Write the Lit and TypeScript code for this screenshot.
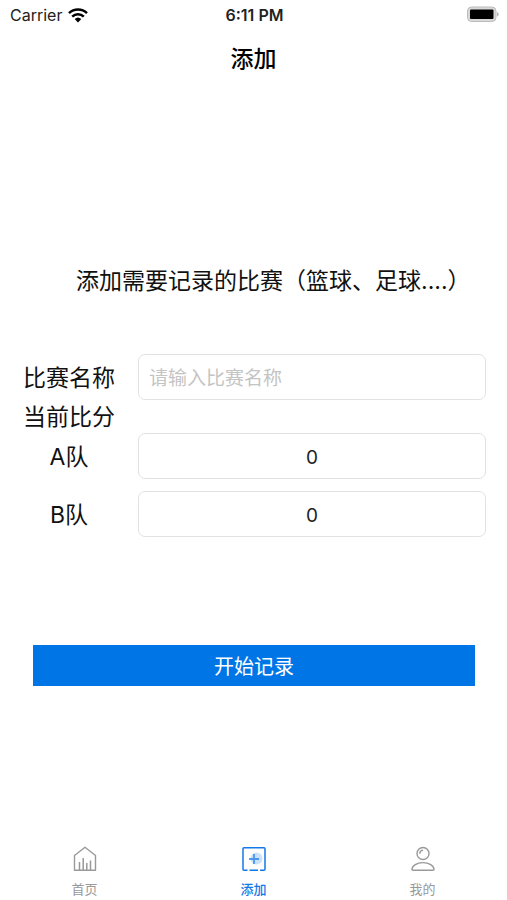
import { LitElement, html, css, svg } from "lit";
import { customElement, property, state } from "lit/decorators.js";
import { classMap } from "lit/directives/class-map.js";

type TabId = "home" | "add" | "me";

const icons = {
  home: svg`
    <g fill="none" stroke="currentColor">
      <path d="M3.500 10.500 14 2.200 24.500 10.500V25.200H3.500Z" stroke-width="1.400" stroke-linejoin="round" />
      <path d="M8.500 25V17M12.200 25V13M15.800 25V18M19.500 25V15.500" stroke-width="1.500" />
    </g>`,
  add: svg`
    <rect x="3" y="2.700" width="22" height="22.500" rx="1" fill="none" stroke="currentColor" stroke-width="1.500" />
    <circle cx="16.500" cy="13.500" r="6" fill="currentColor" opacity="0.22" />
    <path d="M9 14H19M14 9V19" stroke="currentColor" stroke-width="1.800" opacity="0.7" />
    <path d="M7.500 24.800H9.500M18 24.800H20" stroke="#fff" stroke-width="2.500" />`,
  me: svg`
    <g fill="none" stroke="currentColor" stroke-width="1.400" stroke-linecap="round" stroke-linejoin="round">
      <circle cx="14" cy="8.500" r="6" />
      <path d="M10.800 8.200A3.300 3.300 0 0 1 13.500 5.300" />
      <path d="M3 24.500C3 20.500 8 17.600 14 17.600S25 20.500 25 24.500Q25 25.200 24 25.200H4Q3 25.200 3 24.500Z" />
    </g>`,
};

@customElement("status-bar")
export class StatusBar extends LitElement {
  static styles = css`
    :host {
      display: grid;
      grid-template-columns: 1fr auto 1fr;
      align-items: center;
      height: 30px;
      padding: 0 8px 0 10px;
      font-size: 16px;
      line-height: 20px;
      color: #222;
    }
    .network {
      display: flex;
      align-items: center;
      gap: 6px;
    }
    .time {
      font-weight: 600;
    }
    .battery {
      justify-self: end;
    }
    svg {
      display: block;
    }
  `;

  render() {
    return html`
      <div class="network">
        <span>Carrier</span>
        <svg width="20" height="15" viewBox="0 0 20 15" role="img" aria-label="Wi-Fi">
          <g fill="none" stroke="#000" stroke-width="2.500">
            <path d="M1 5.200A13 13 0 0 1 19 5.200" />
            <path d="M4.200 8.600A8.300 8.300 0 0 1 15.800 8.600" />
          </g>
          <path d="M6.700 11.100A4.800 4.800 0 0 1 13.300 11.100L10 14.500Z" fill="#000" />
        </svg>
      </div>
      <span class="time">6:11 PM</span>
      <svg class="battery" width="33" height="18" viewBox="0 0 33 18" role="img" aria-label="Battery">
        <rect x="1.500" y="1" width="28.500" height="14.500" rx="4" fill="#d8d8d8" stroke="#bcbcbc" stroke-width="1" />
        <rect x="4" y="3.500" width="23.500" height="9.500" rx="1" fill="#000" />
        <path d="M31 6Q32.700 7 32.700 8.300T31 10.600Z" fill="#b4b4b4" />
      </svg>
    `;
  }
}

@customElement("tab-bar")
export class TabBar extends LitElement {
  @property() active: TabId = "add";

  static styles = css`
    :host {
      display: block;
    }
    nav {
      display: grid;
      grid-template-columns: repeat(3, 1fr);
    }
    .tab {
      display: flex;
      flex-direction: column;
      align-items: center;
      gap: 7px;
      height: 55px;
      font-size: 13px;
      line-height: 18px;
      color: #999;
      text-decoration: none;
    }
    .active {
      color: #1478e8;
      font-weight: 500;
    }
  `;

  render() {
    const tabs: { id: TabId; label: string }[] = [
      { id: "home", label: "首页" },
      { id: "add", label: "添加" },
      { id: "me", label: "我的" },
    ];
    return html`<nav>
      ${tabs.map(
        (tab) => html`<a
          class=${classMap({ tab: true, active: tab.id === this.active })}
          href="#${tab.id}"
        >
          <svg width="28" height="28" viewBox="0 0 28 28" aria-hidden="true">${icons[tab.id]}</svg>
          <span>${tab.label}</span>
        </a>`
      )}
    </nav>`;
  }
}

@customElement("app-root")
export class AppRoot extends LitElement {
  @state() private scores = { a: "0", b: "0" };

  static styles = css`
    :host {
      display: flex;
      flex-direction: column;
      min-height: 100vh;
      background: #fff;
      color: #111;
      font-family: Inter, "Noto Sans CJK SC", sans-serif;
    }
    .title {
      margin: 0;
      font-size: 23px;
      line-height: 58px;
      font-weight: 500;
      text-align: center;
      color: #000;
    }
    main {
      flex: 1;
      display: flex;
      flex-direction: column;
      padding-top: 177px;
    }
    .prompt {
      margin: 0 0 57px;
      padding-left: 15%;
      font-size: 23px;
      line-height: 32px;
      font-weight: 400;
      white-space: nowrap;
    }
    form {
      display: flex;
      flex-direction: column;
    }
    .row {
      display: grid;
      grid-template-columns: 138px 1fr;
      align-items: center;
      padding-right: 21px;
    }
    .row + .row {
      margin-top: 12px;
    }
    .label {
      box-sizing: border-box;
      width: 138px;
      padding-top: 2px;
      font-size: 23px;
      line-height: 31px;
      text-align: center;
    }
    .field {
      box-sizing: border-box;
      width: 100%;
      height: 46px;
      padding: 2px 10px 0;
      border: 1px solid #e2e2e2;
      border-radius: 7px;
      background: #fff;
      color: #222;
      font: inherit;
      font-size: 19px;
      outline: none;
    }
    .field::placeholder {
      color: #c4c4c4;
      opacity: 1;
    }
    .score {
      text-align: center;
    }
    .submit {
      height: 41px;
      margin: 108px 32px 0 33px;
      padding: 0;
      border: 0;
      background: #0076e6;
      color: #fff;
      font: inherit;
      font-size: 20px;
    }
  `;

  render() {
    return html`
      <status-bar></status-bar>
      <h1 class="title">添加</h1>
      <main>
        <h2 class="prompt">添加需要记录的比赛（篮球、足球....）</h2>
        <form @submit=${(e: Event) => e.preventDefault()}>
          <div class="row">
            <label class="label" for="name">比赛名称</label>
            <input class="field" id="name" type="text" placeholder="请输入比赛名称" />
          </div>
          <div role="group" aria-labelledby="score-heading">
            <div class="label" id="score-heading">当前比分</div>
            ${this.renderScore("a", "A队")} ${this.renderScore("b", "B队")}
          </div>
          <button class="submit" type="submit">开始记录</button>
        </form>
      </main>
      <tab-bar active="add"></tab-bar>
    `;
  }

  private renderScore(team: "a" | "b", label: string) {
    return html`<div class="row">
      <label class="label" for=${team}>${label}</label>
      <input
        class="field score"
        id=${team}
        type="text"
        inputmode="numeric"
        .value=${this.scores[team]}
        @input=${(e: Event) => {
          this.scores = { ...this.scores, [team]: (e.target as HTMLInputElement).value };
        }}
      />
    </div>`;
  }
}
